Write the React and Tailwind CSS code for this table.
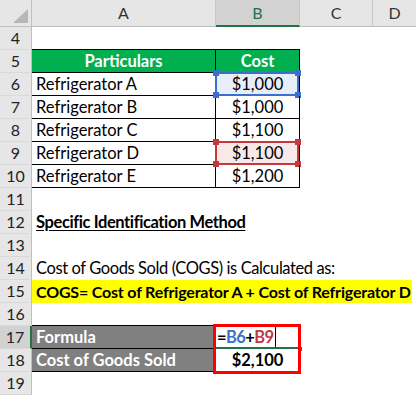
const font = "font-['Lato','Liberation_Sans',sans-serif]"

function RowHead({ n, active }) {
  return (
    <div
      className={`w-[32px] shrink-0 flex items-center justify-center border-b border-r border-b-[#d9d9d9] text-[16px] text-[#222] ${
        active ? 'bg-[#d2d2d2] border-r-2 border-r-[#217346]' : 'bg-[#e6e6e6] border-r-[#bfbfbf]'
      }`}
    >
      {n}
    </div>
  )
}

function Row({ n, active, children }) {
  return (
    <div className="flex h-[23px]">
      <RowHead n={n} active={active} />
      {children}
    </div>
  )
}

const items = [
  { n: 6, name: 'Refrigerator A', cost: '$1,000', mark: 'blue' },
  { n: 7, name: 'Refrigerator B', cost: '$1,000' },
  { n: 8, name: 'Refrigerator C', cost: '$1,100' },
  { n: 9, name: 'Refrigerator D', cost: '$1,100', mark: 'red' },
  { n: 10, name: 'Refrigerator E', cost: '$1,200' },
]

function Handles({ color }) {
  return (
    <>
      <span className={`absolute -left-[4px] -top-[4px] w-[6px] h-[6px] ${color}`} />
      <span className={`absolute -right-[4px] -top-[4px] w-[6px] h-[6px] ${color}`} />
      <span className={`absolute -left-[4px] -bottom-[4px] w-[6px] h-[6px] ${color}`} />
      <span className={`absolute -right-[4px] -bottom-[4px] w-[6px] h-[6px] ${color}`} />
    </>
  )
}

export default function App() {
  return (
    <div className={`w-[416px] h-[395px] overflow-hidden bg-white ${font} text-black text-[16.5px]`}>
      {/* column headers */}
      <div className="flex h-[27px] bg-[#e6e6e6] border-b border-[#bfbfbf] text-[16px] text-[#333]">
        <div className="w-[32px] shrink-0 border-r border-[#bfbfbf] relative">
          <svg className="absolute left-0 top-0" width="32" height="26" viewBox="0 0 32 26">
            <polygon points="13,23 28,23 28,9" fill="#b7b7b7" />
          </svg>
        </div>
        <div className="w-[184px] shrink-0 flex items-center justify-center border-r border-[#c8c8c8]">A</div>
        <div className="w-[84px] shrink-0 flex items-center justify-center bg-[#d2d2d2] border-r border-[#c8c8c8] border-b-2 border-b-[#217346] -mb-px text-[#217346]">
          B
        </div>
        <div className="w-[73px] shrink-0 flex items-center justify-center border-r border-[#c8c8c8]">C</div>
        <div className="flex-1 flex items-center justify-center">D</div>
      </div>

      <Row n={4}>
        <div className="w-[184px] shrink-0 border-b border-black" />
        <div className="w-[84px] shrink-0 border-b border-black" />
      </Row>

      <Row n={5}>
        <div className="w-[184px] shrink-0 flex items-center justify-center bg-[#00b050] text-white font-bold border-r border-b border-black">
          Particulars
        </div>
        <div className="w-[84px] shrink-0 flex items-center justify-center bg-[#00b050] text-white font-bold border-r border-b border-black">
          Cost
        </div>
      </Row>

      {items.map((it) => (
        <Row key={it.n} n={it.n}>
          <div className="w-[184px] shrink-0 flex items-center pl-[4px] border-r border-b border-black">
            {it.name}
          </div>
          <div className="w-[84px] shrink-0 flex items-center justify-center border-r border-b border-black relative">
            {it.mark && (
              <div
                className={`absolute -left-px -top-px w-[84px] h-[24px] border-2 ${
                  it.mark === 'blue' ? 'border-[#3a6fcc] bg-[#e8eef9]' : 'border-[#c4383e] bg-[#f9e8e8]'
                }`}
              >
                <Handles color={it.mark === 'blue' ? 'bg-[#3a6fcc]' : 'bg-[#c4383e]'} />
              </div>
            )}
            <span className="relative">{it.cost}</span>
          </div>
        </Row>
      ))}

      <Row n={11} />
      <Row n={12}>
        <div className="flex items-center pl-[4px] font-bold underline underline-offset-2 tracking-[-0.4px] whitespace-nowrap">
          Specific Identification Method
        </div>
      </Row>
      <Row n={13} />
      <Row n={14}>
        <div className="flex items-center pl-[4px] tracking-[-0.4px] whitespace-nowrap">
          Cost of Goods Sold (COGS) is Calculated as:
        </div>
      </Row>
      <Row n={15}>
        <div className="w-[380px] flex items-center pl-[4px] bg-[#ffff00] font-bold text-[16px] tracking-[-0.18px] whitespace-nowrap">
          COGS= Cost of Refrigerator A + Cost of Refrigerator D
        </div>
      </Row>
      <Row n={16}>
        <div className="w-[184px] shrink-0 border-b border-black" />
        <div className="w-[84px] shrink-0 border-b border-black" />
      </Row>

      <div className="relative">
        <Row n={17} active>
          <div className="w-[184px] shrink-0 flex items-center pl-[4px] bg-[#808080] text-white font-bold border-r border-b border-black">
            Formula
          </div>
          <div className="w-[84px] shrink-0 flex items-center pl-[1px] font-bold tracking-[-0.6px] border-r border-black relative">
            <span>=</span>
            <span className="text-[#3a6fcc]">B6</span>
            <span>+</span>
            <span className="text-[#c4383e]">B9</span>
            <span className="ml-[2px] w-px h-[21px] bg-black" />
            <span className="absolute left-0 right-0 bottom-0 h-[2px] bg-[#217346]" />
            <span className="absolute -right-[3px] -bottom-[2px] w-[4px] h-[4px] bg-[#217346]" />
          </div>
        </Row>
        <Row n={18}>
          <div className="w-[184px] shrink-0 flex items-center pl-[4px] bg-[#808080] text-white font-bold border-r border-b border-black">
            Cost of Goods Sold
          </div>
          <div className="w-[84px] shrink-0 flex items-center justify-center font-bold border-r border-b border-black">
            $2,100
          </div>
        </Row>
        <div className="absolute left-[213px] top-[-2px] w-[88px] h-[50px] border-[3px] border-[#ff0000] pointer-events-none" />
      </div>

      <Row n={19} />
    </div>
  )
}
